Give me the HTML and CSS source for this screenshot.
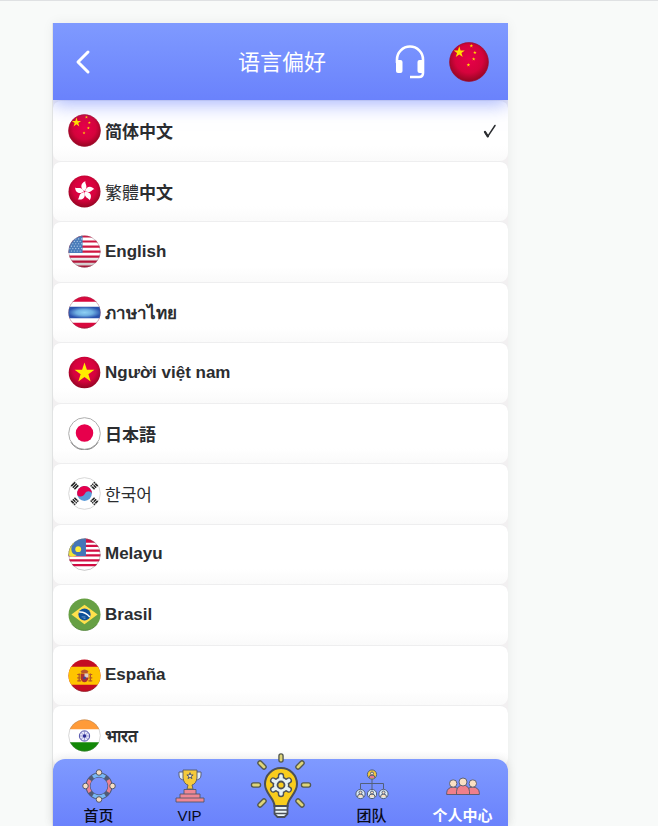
FILE: index.html
```html
<!DOCTYPE html>
<html lang="zh-CN">
<head>
<meta charset="utf-8">
<meta name="viewport" content="width=device-width, initial-scale=1">
<title>语言偏好</title>
<link rel="stylesheet" href="styles.css">
</head>
<body>
<svg class="defs" aria-hidden="true">
  <defs>
    <clipPath id="disc"><circle cx="17" cy="17" r="16.5"/></clipPath>
    <radialGradient id="red" cx=".5" cy=".42" r=".6"><stop offset="0" stop-color="#e8004a"/><stop offset=".6" stop-color="#d5033c"/><stop offset="1" stop-color="#8e0620"/></radialGradient>
    <radialGradient id="sky"><stop offset="0" stop-color="#8ed0f4"/><stop offset=".5" stop-color="#6fb0e2"/><stop offset="1" stop-color="#2a51ad"/></radialGradient>
    <linearGradient id="shade" x2="0" y2="1"><stop offset=".6" stop-color="#000" stop-opacity="0"/><stop offset="1" stop-color="#300" stop-opacity=".28"/></linearGradient>
    <polygon id="star" points="0,-10 2.3,-3.1 9.5,-3.1 3.7,1.2 5.9,8.1 0,3.9 -5.9,8.1 -3.7,1.2 -9.5,-3.1 -2.3,-3.1"/>
    <symbol id="cn" viewBox="0 0 34 34">
      <circle cx="17" cy="17" r="16.5" fill="url(#red)" stroke="#a00a2b" stroke-width=".6"/>
      <g fill="#ffe100"><use href="#star" transform="translate(8.7 8.7) scale(.5)"/><use href="#star" transform="translate(19 3.3) scale(.16)"/><use href="#star" transform="translate(22 9) scale(.16)"/><use href="#star" transform="translate(21 14.5) scale(.16)"/><use href="#star" transform="translate(16.5 19.5) scale(.16)"/></g>
    </symbol>
    <path id="petal" d="M17 16.5C12.5 14 12.5 8.500 18 6.500C16.8 9 21.5 11.5 17 16.5Z"/>
  </defs>
</svg>

<div class="app">
  <header class="topbar">
    <button class="icon-button back" aria-label="返回">
      <svg width="16" height="26" viewBox="0 0 16 26" fill="none" stroke="#fff" stroke-width="3" stroke-linecap="round" stroke-linejoin="round"><path d="M13 3 3 13 13 23"/></svg>
    </button>
    <h1 class="title">语言偏好</h1>
    <div class="actions">
      <button class="icon-button" aria-label="客服">
        <svg width="30" height="34" viewBox="0 0 30 34" fill="none"><path d="M2 18V14.500a13 13 0 0 1 26 0V28q0 4-4 4H15" stroke="#fff" stroke-width="2.6"/><rect x="1" y="15" width="6.5" height="13" rx="2" fill="#fff"/><rect x="22.5" y="15" width="6.5" height="13" rx="2" fill="#fff"/></svg>
      </button>
      <button class="icon-button" aria-label="简体中文"><svg width="40" height="40"><use href="#cn"/></svg></button>
    </div>
  </header>

  <main class="languages">
    <button class="language" lang="zh-CN"><svg class="flag"><use href="#cn"/></svg><span>简体中文</span><svg class="check" viewBox="0 0 14 16" fill="none" stroke="#2b2d30" stroke-linecap="round" stroke-linejoin="round"><path d="M2 9 4.8 13.4 12 2.5" stroke-width="1.5"/><path d="M2 9 4.8 13.4" stroke-width="2.3"/></svg></button>

    <button class="language" lang="zh-TW"><svg class="flag" viewBox="0 0 34 34"><circle cx="17" cy="17" r="16.5" fill="url(#red)"/><g fill="#fff"><use href="#petal"/><use href="#petal" transform="rotate(72 17 17)"/><use href="#petal" transform="rotate(144 17 17)"/><use href="#petal" transform="rotate(216 17 17)"/><use href="#petal" transform="rotate(288 17 17)"/></g></svg><span><span class="light">繁體</span>中文</span></button>

    <button class="language" lang="en"><svg class="flag" viewBox="0 0 34 34"><g clip-path="url(#disc)"><path fill="#fff" d="M0 0h34v34H0z"/><path stroke="#cf1742" stroke-width="2.3" d="M0 1.5h34M0 6.7h34M0 11.9h34M0 17.1h34M0 22.3h34M0 27.5h34M0 32.7h34"/><path fill="#4a7cba" d="M0 0h15v18.5H0z"/><path stroke="#c3daf2" stroke-width="1.2" stroke-linecap="round" stroke-dasharray="0 3" d="M2 4h13M3.5 6.5H15M2 9h13M.5 11.5H15M2 14h13M.5 16.5H15"/><path fill="url(#shade)" d="M0 0h34v34H0z"/></g><circle cx="17" cy="17" r="16.3" fill="none" stroke="#8a5c70" stroke-opacity=".6" stroke-width=".6"/></svg><span>English</span></button>

    <button class="language" lang="th"><svg class="flag" viewBox="0 0 34 34"><g clip-path="url(#disc)"><path fill="#d9093e" d="M0 0h34v34H0z"/><path fill="#fff" d="M0 6h34v21.500H0z"/><path fill="url(#sky)" d="M0 11h34v12H0z"/><path fill="url(#shade)" d="M0 27.500h34V34H0z"/></g><circle cx="17" cy="17" r="16.3" fill="none" stroke="#666" stroke-opacity=".4" stroke-width=".6"/></svg><span>ภาษาไทย</span></button>

    <button class="language" lang="vi"><svg class="flag" viewBox="0 0 34 34"><circle cx="17" cy="17" r="16.3" fill="url(#red)"/><use href="#star" fill="#ffec00" transform="translate(17 17.5) scale(1.08)"/></svg><span>Người việt nam</span></button>

    <button class="language" lang="ja"><svg class="flag" viewBox="0 0 34 34"><circle cx="17" cy="17" r="16.3" fill="#fff" stroke="#aaa"/><path d="M3 26a16.3 16.3 0 0 0 28 0" fill="none" stroke="#858585"/><circle cx="17" cy="16.5" r="9" fill="#e7004c"/></svg><span>日本語</span></button>

    <button class="language" lang="ko"><svg class="flag" viewBox="0 0 34 34"><circle cx="17" cy="17" r="16.3" fill="#fff" stroke="#ccc" stroke-width=".8"/><circle cx="17" cy="17" r="7.6" fill="#5a9bd9"/><path d="M9.6 18.5A7.6 7.6 0 1 1 24.6 17C23 13.8 19 14 17.5 17S12 21.5 9.6 18.5Z" fill="#e5004c"/><g stroke="#222" stroke-width="1.6"><path d="m3.400 9.400 4-4M5 11l4-4M6.600 12.600l4-4M3.400 24.600l4 4M5 23l4 4M6.600 21.400l4 4M30.600 9.400l-4-4M29 11l-4-4M27.400 12.600l-4-4M30.600 24.600l-4 4M29 23l-4 4M27.400 21.400l-4 4"/></g><path stroke="#fff" stroke-width=".9" d="m24 10.500 5-5M5 28.500l4.500-4.500M24.500 24l4.500 4.500"/></svg><span class="light">한국어</span></button>

    <button class="language" lang="ms"><svg class="flag" viewBox="0 0 34 34"><g clip-path="url(#disc)"><path fill="#fff" d="M0 0h34v34H0z"/><path stroke="#d20d43" stroke-width="2.3" d="M0 8h34M0 13h34M0 18h34M0 23h34M0 28h34"/><path fill="#d20d43" d="M17 0h17v5H17z"/><path fill="#4475b7" d="M0 0h18.500v18.500H0z"/><path fill="#f5e637" d="M6.500 5.500A7 7 0 1 0 9 17.500 6 6 0 0 1 3.500 12 7 7 0 0 1 6.500 5.500Z"/><circle cx="10.500" cy="11.500" r="3" fill="#ffed38"/></g><circle cx="17" cy="17" r="16.3" fill="none" stroke="#777" stroke-opacity=".6" stroke-width=".7"/></svg><span>Melayu</span></button>

    <button class="language" lang="pt"><svg class="flag" viewBox="0 0 34 34"><circle cx="17" cy="17" r="16.5" fill="#67a044"/><path fill="#ffe14c" d="m3.500 17 13.500-10 13.500 10-13.500 10Z"/><circle cx="17" cy="17" r="6.3" fill="#0e5099"/><path d="M11.500 14.500q6-.5 11 5" fill="none" stroke="#fff" stroke-width="1.6"/><path d="M14 19.500h4M16 21h2" stroke="#9fc2e8" stroke-width=".6"/><path d="M4 27a16.300 16.300 0 0 0 26 0" fill="none" stroke="#4e7f38" stroke-width=".8"/></svg><span>Brasil</span></button>

    <button class="language" lang="es"><svg class="flag" viewBox="0 0 34 34"><g clip-path="url(#disc)"><path fill="#c40c22" d="M0 0h34v34H0z"/><path fill="#ffc400" d="M0 8h34v18.500H0z"/><path fill="#b8562b" d="M13 12.500q4-3.500 8 0l-1 2h-6Z"/><path fill="#ad3032" d="M13 15h8v5q-1 3.500-4 4-3-.5-4-4Z"/><path fill="#ddd0ca" d="M17 15h4v4h-4z"/><path stroke="#a95528" stroke-width="1.3" d="M11.500 15v8M23 15v8"/><path stroke="#b8562b" stroke-width="1.2" d="M9.500 16h3M22 16h3M9.500 22.500h4M21 22.500h4M9.500 19.500h3M22 19.500h3"/><circle cx="17" cy="19.500" r="1.5" fill="#43478d"/></g><path d="M4 27a16.300 16.300 0 0 0 26 0" fill="none" stroke="#8d1724" stroke-width=".8"/></svg><span>España</span></button>

    <button class="language" lang="hi"><svg class="flag" viewBox="0 0 34 34"><g clip-path="url(#disc)"><path fill="#fff" d="M0 0h34v34H0z"/><path fill="#ff9b38" d="M0 0h34v10.500H0z"/><path fill="#128807" d="M0 24h34v10H0z"/><circle cx="17" cy="17.500" r="5.300" fill="#e9e9fb" stroke="#3c3c9e" stroke-width=".9"/><g stroke="#5656ad" stroke-width=".5"><path d="M17 12.500v10M12 17.500h10M13.500 14l7 7M20.500 14l-7 7"/></g><circle cx="17" cy="17.500" r="1.8" fill="#2e2e94"/></g><circle cx="17" cy="17" r="16.3" fill="none" stroke="#777" stroke-opacity=".5" stroke-width=".6"/></svg><span>भारत</span></button>
  </main>

  <nav class="tabs">
    <a class="tab" href="#home">
      <svg viewBox="0 0 34 34" fill="none"><circle cx="17" cy="17" r="11" stroke="#505b78" stroke-width="5"/><path d="M11 8a11 11 0 0 1 12 0M11 26a11 11 0 0 0 12 0" stroke="#78b8f5" stroke-width="3.5"/><path d="M8 11a11 11 0 0 0 0 12M26 11a11 11 0 0 1 0 12" stroke="#ed8290" stroke-width="3.5"/><g fill="#f7dfc2" stroke="#53586a"><circle cx="17" cy="3.500" r="2.8"/><circle cx="3.500" cy="17" r="2.8"/><circle cx="30.500" cy="17" r="2.8"/><circle cx="17" cy="30.500" r="2.8"/></g></svg>
      <span>首页</span>
    </a>
    <a class="tab" href="#vip">
      <svg viewBox="0 0 34 34" stroke="#53586a" stroke-width=".9"><path d="M11 3H6v3q0 5 6 5M22 3h6v3q0 5-6 5" fill="#e5edf3"/><path d="M10 1h14v8q-1 6-5 7l1 4h-6l1-4q-4-1-5-7Z" fill="#f6ca3c"/><use href="#star" transform="translate(17 7) scale(.33)" fill="#f4eee0" stroke-width="3"/><path d="M11 20.500h12V25h4v4h4v4H3v-4h4v-4h4Z" fill="#ef8794"/><path d="M11 25h12M7 29h20"/></svg>
      <span>VIP</span>
    </a>
    <a class="tab tab-main" href="#tasks" aria-label="任务">
      <svg viewBox="0 0 62 66">
        <path stroke="#53584e" stroke-width="5.5" stroke-linecap="round" d="M31 4v4M10 11l4 4M52 11l-4 4M3.500 33h5M53.500 33h5M10 53l4-4M52 53l-4-4"/>
        <path stroke="#ded477" stroke-width="2.8" stroke-linecap="round" d="M31 4v4M10 11l4 4M52 11l-4 4M3.500 33h5M53.500 33h5M10 53l4-4M52 53l-4-4"/>
        <path d="M24.500 54C24.500 46 15 42 15 32a16 16 0 0 1 32 0C47 42 37.500 46 37.500 54Z" fill="#f9cd1d" stroke="#4b5058" stroke-width="2"/>
        <path d="M24.500 54h13v8l-3 3h-7l-3-3Z" fill="#edf7f9" stroke="#4b5058" stroke-width="1.8"/>
        <path d="M25 58h12M25 61.500h12" stroke="#4b5058" stroke-width="1.5"/>
        <path d="M31 24v18M23.200 28.500l15.600 9M38.800 28.500l-15.600 9" stroke="#4b5058" stroke-width="6.400" stroke-linecap="round"/>
        <circle cx="31" cy="33" r="8.500" fill="#4b5058"/>
        <path d="M31 24v18M23.200 28.500l15.600 9M38.800 28.500l-15.600 9" stroke="#e5f2f5" stroke-width="3.600" stroke-linecap="round"/>
        <circle cx="31" cy="33" r="7" fill="#e5f2f5"/>
        <circle cx="31" cy="33" r="3.500" fill="#f9cd1d" stroke="#4b5058" stroke-width="1.8"/>
      </svg>
    </a>
    <a class="tab" href="#team">
      <svg viewBox="0 0 34 34" fill="none" stroke="#53607a"><path d="M17 10v11M5.500 20v-5.500h23V20"/><circle cx="17" cy="5.500" r="4.6" fill="#f5c939"/><circle cx="5.500" cy="25" r="4.6" fill="#dcecf7"/><circle cx="17" cy="25" r="4.6" fill="#dcecf7"/><circle cx="28.500" cy="25" r="4.6" fill="#dcecf7"/><g fill="#f8dfc1"><path fill="#e8798b" d="M14 9q0-3 3-3t3 3"/><path d="M2.500 28q0-3 3-3t3 3M14 28q0-3 3-3t3 3M25.500 28q0-3 3-3t3 3"/><circle cx="17" cy="4.500" r="1.5"/><circle cx="5.500" cy="23.500" r="1.5"/><circle cx="17" cy="23.500" r="1.5"/><circle cx="28.500" cy="23.500" r="1.5"/></g></svg>
      <span>团队</span>
    </a>
    <a class="tab active" href="#me" aria-current="page">
      <svg viewBox="0 0 34 34" stroke="#53586a" stroke-width=".9"><g fill="#f07f8b"><path d="M.7 25.500v-2q.5-5 6.500-5.500 6 .5 6.500 5.500v2ZM20.300 25.500v-2q.5-5 6.500-5.500 6 .5 6.500 5.500v2Z"/><path d="M10.500 25.500v-3q.5-6 6.500-6.500 6 .5 6.500 6.500v3Z"/></g><g fill="#f9e0c3"><circle cx="7.200" cy="14.500" r="3.7"/><circle cx="26.800" cy="14.500" r="3.7"/><circle cx="17" cy="13" r="4"/></g></svg>
      <span>个人中心</span>
    </a>
  </nav>
</div>
</body>
</html>
```
FILE: styles.css
```css
* {
  box-sizing: border-box;
}

body {
  margin: 0;
  min-height: 100vh;
  padding: 22px 150px 0 53px;
  border-top: 1px solid #dfe1e3;
  background: #f8faf9;
  font-family: "Liberation Sans", "Noto Sans CJK SC", sans-serif;
}

.defs {
  position: absolute;
  width: 0;
  height: 0;
}

button {
  border: 0;
  padding: 0;
  background: none;
  color: inherit;
  font: inherit;
  cursor: pointer;
}

.app {
  position: relative;
  display: flex;
  flex-direction: column;
  min-height: calc(100vh - 23px);
  background: #f2f0f1;
  box-shadow: 0 0 12px rgba(0, 0, 0, 0.06), -1px 0 0 #e8eaea;
}

.topbar {
  position: relative;
  z-index: 1;
  display: grid;
  grid-template-columns: 1fr auto 1fr;
  align-items: center;
  height: 77px;
  padding: 0 19px 0 22px;
  background: linear-gradient(#7f9aff, #6a82fc);
  box-shadow: 0 4px 18px rgba(106, 130, 252, 0.6);
  clip-path: inset(0 0 -40px 0);
  color: #fff;
}

.icon-button {
  display: flex;
}

.back {
  justify-self: start;
}

.title {
  margin: 0;
  padding-bottom: 4px;
  font-size: 22px;
  font-weight: 400;
}

.actions {
  display: flex;
  align-items: center;
  justify-content: flex-end;
  gap: 24px;
}

.languages {
  flex: 1;
  display: grid;
  grid-template-rows: repeat(12, minmax(56px, 1fr));
}

.language {
  display: flex;
  align-items: center;
  gap: 4px;
  padding: 0 11px 0 15px;
  border-top: 1px solid #eeeeef;
  border-radius: 8px;
  background: linear-gradient(#fff 75%, #fafafa);
  color: #2b2d30;
  font-size: 17px;
  font-weight: 700;
  text-align: left;
}

.light {
  font-weight: 400;
}

.flag {
  width: 33px;
  height: 33px;
  flex: none;
}

.check {
  width: 14px;
  height: 16px;
  margin-left: auto;
}

.tabs {
  position: absolute;
  z-index: 2;
  right: 0;
  bottom: 0;
  left: 0;
  display: grid;
  grid-template-columns: repeat(5, 1fr);
  height: 67px;
  border-radius: 12px 12px 0 0;
  background: linear-gradient(#7f9aff, #6a82fc);
  box-shadow: 0 0 10px rgba(0, 0, 0, 0.1);
}

.tab {
  display: flex;
  flex-direction: column;
  align-items: center;
  gap: 3px;
  padding-top: 10px;
  color: #080a18;
  font-size: 15px;
  font-weight: 500;
  line-height: 20px;
  text-decoration: none;
}

.tab svg {
  width: 34px;
  height: 34px;
  flex: none;
}

.tab-main {
  padding-top: 0;
}

.tab-main svg {
  width: 62px;
  height: 66px;
  margin-top: -7px;
}

.active {
  color: #fff;
  font-weight: 700;
}
```
